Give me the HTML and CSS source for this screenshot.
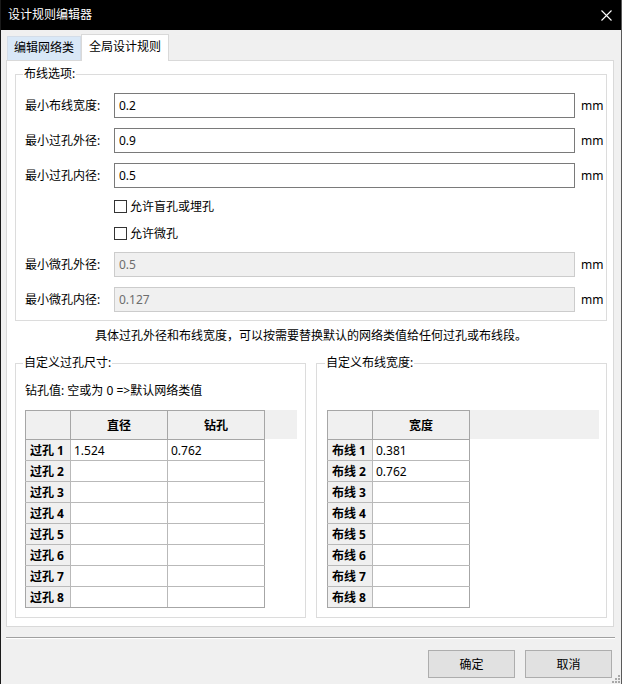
FILE: index.html
```html
<!DOCTYPE html>
<html lang="zh-CN">
<head>
  <meta charset="UTF-8" />
  <meta name="viewport" content="width=device-width, initial-scale=1.0" />
  <title>设计规则编辑器</title>
  <link rel="stylesheet" href="styles.css">
</head>
<body>
  <div class="window">
    <div class="titlebar">
      <span>设计规则编辑器</span>
      <svg class="close" width="11" height="11" viewBox="0 0 11 11">
        <path d="M0.5 0.5L10.5 10.5M10.5 0.5L0.5 10.5" stroke="#fff" stroke-width="1.1" fill="none" />
      </svg>
    </div>

    <div class="tabs">
      <div class="tab">编辑网络类</div>
      <div class="tab active">全局设计规则</div>
    </div>

    <div class="pane">
      <fieldset class="group routing">
        <legend>布线选项:</legend>
        <div class="form">
          <label>最小布线宽度:</label>
          <input class="field" type="text" value="0.2" />
          <span class="unit">mm</span>

          <label>最小过孔外径:</label>
          <input class="field" type="text" value="0.9" />
          <span class="unit">mm</span>

          <label>最小过孔内径:</label>
          <input class="field" type="text" value="0.5" />
          <span class="unit">mm</span>

          <label class="check"><input type="checkbox" />允许盲孔或埋孔</label>
          <label class="check"><input type="checkbox" />允许微孔</label>

          <label>最小微孔外径:</label>
          <input class="field" type="text" value="0.5" disabled />
          <span class="unit">mm</span>

          <label>最小微孔内径:</label>
          <input class="field" type="text" value="0.127" disabled />
          <span class="unit">mm</span>
        </div>
      </fieldset>

      <p class="note">具体过孔外径和布线宽度，可以按需要替换默认的网络类值给任何过孔或布线段。</p>

      <div class="custom">
        <fieldset class="group">
          <legend>自定义过孔尺寸:</legend>
          <div class="hint">钻孔值: 空或为 0 =&gt;默认网络类值</div>
          <div class="grid">
            <table class="vias">
              <colgroup><col class="head-col"><col class="val-col"><col class="val-col"></colgroup>
              <thead>
                <tr><th></th><th>直径</th><th>钻孔</th></tr>
              </thead>
              <tbody>
                <tr><th>过孔 1</th><td>1.524</td><td>0.762</td></tr>
                <tr><th>过孔 2</th><td></td><td></td></tr>
                <tr><th>过孔 3</th><td></td><td></td></tr>
                <tr><th>过孔 4</th><td></td><td></td></tr>
                <tr><th>过孔 5</th><td></td><td></td></tr>
                <tr><th>过孔 6</th><td></td><td></td></tr>
                <tr><th>过孔 7</th><td></td><td></td></tr>
                <tr><th>过孔 8</th><td></td><td></td></tr>
              </tbody>
            </table>
          </div>
        </fieldset>

        <fieldset class="group">
          <legend>自定义布线宽度:</legend>
          <div class="hint"></div>
          <div class="grid">
            <table class="tracks">
              <colgroup><col class="head-col"><col class="val-col"></colgroup>
              <thead>
                <tr><th></th><th>宽度</th></tr>
              </thead>
              <tbody>
                <tr><th>布线 1</th><td>0.381</td></tr>
                <tr><th>布线 2</th><td>0.762</td></tr>
                <tr><th>布线 3</th><td></td></tr>
                <tr><th>布线 4</th><td></td></tr>
                <tr><th>布线 5</th><td></td></tr>
                <tr><th>布线 6</th><td></td></tr>
                <tr><th>布线 7</th><td></td></tr>
                <tr><th>布线 8</th><td></td></tr>
              </tbody>
            </table>
          </div>
        </fieldset>
      </div>
    </div>

    <div class="separator"></div>

    <div class="buttons">
      <button>确定</button>
      <button>取消</button>
    </div>

    <svg class="grip" width="9" height="9" viewBox="0 0 9 9">
      <rect x="6" y="0" width="2" height="2" fill="#a8a8a8" />
      <rect x="3" y="3" width="2" height="2" fill="#a8a8a8" />
      <rect x="6" y="3" width="2" height="2" fill="#a8a8a8" />
      <rect x="0" y="6" width="2" height="2" fill="#a8a8a8" />
      <rect x="3" y="6" width="2" height="2" fill="#a8a8a8" />
      <rect x="6" y="6" width="2" height="2" fill="#a8a8a8" />
    </svg>
  </div>
</body>
</html>
```

FILE: styles.css
```css
* {
  box-sizing: border-box;
}
body {
  margin: 0;
  padding: 0;
  background: #f0f0f0;
  font-family: "Noto Sans", "Noto Sans CJK SC", sans-serif;
  font-size: 12px;
  color: #000;
}
.window {
  position: relative;
  width: 622px;
  height: 684px;
  background: #f0f0f0;
  border-left: 1px solid #1a1a1a;
  border-right: 1px solid #5a5a5a;
  overflow: hidden;
}
.titlebar {
  height: 30px;
  background: #000;
  color: #fff;
  display: flex;
  align-items: center;
  justify-content: space-between;
  padding: 0 9px 0 8px;
  margin-left: -1px;
}
.titlebar span {
  line-height: 16px;
}
.close {
  display: block;
}

/* tab strip */
.tabs {
  height: 30px;
  display: flex;
  align-items: flex-end;
  padding-left: 6px;
}
.tab {
  height: 24px;
  line-height: 22px;
  padding: 0 6px;
  background: #d9e8f7;
  border: 1px solid #d4dde8;
  border-bottom: none;
  white-space: nowrap;
}
.tab.active {
  position: relative;
  z-index: 1;
  height: 27px;
  line-height: 24px;
  margin-bottom: -1px;
  padding: 0 7px;
  background: #fff;
  border-color: #d9d9d9;
}

.pane {
  margin: 0 7px 0 5px;
  background: #fff;
  border: 1px solid #d9d9d9;
  padding: 5px 6px 8px 8px;
}
.group {
  margin: 0;
  border: 1px solid #dcdcdc;
  padding: 11px 8px 8px 9px;
  min-width: 0;
}
.group legend {
  padding: 0 1px;
  margin-left: -2px;
  line-height: 16px;
}

/* form rows: three inputs, two checkboxes, two disabled inputs */
.form {
  display: grid;
  grid-template-columns: 89px 461px 1fr;
  grid-template-rows: 25px 25px 25px 17px 17px 25px 25px;
  row-gap: 10px;
  align-items: center;
}
.form label {
  line-height: 16px;
}
.field {
  height: 25px;
  width: 100%;
  border: 1px solid #7a7a7a;
  padding: 0 4px;
  font: inherit;
  color: #000;
  background: #fff;
  outline: none;
}
.field:disabled {
  background: #f0f0f0;
  border-color: #cccccc;
  color: #6d6d6d;
}
.unit {
  padding-left: 6px;
}
.form .check {
  grid-column: 2 / 4;
  height: 17px;
  display: flex;
  align-items: center;
}
.check input {
  -webkit-appearance: none;
  appearance: none;
  width: 13px;
  height: 13px;
  margin: 0 3px 0 0;
  border: 1px solid #333;
  background: #fff;
}

.note {
  margin: 7px 0 0;
  line-height: 16px;
  text-align: center;
}

/* custom size groups */
.custom {
  display: grid;
  grid-template-columns: 291px 291px;
  column-gap: 10px;
  margin-top: 11px;
}
.custom .group {
  padding: 12px 8px 9px 9px;
}
.hint {
  height: 16px;
  line-height: 16px;
  margin-bottom: 11px;
}
.custom .group:last-child {
  padding-left: 10px;
}
.grid {
  width: 272px;
  background: linear-gradient(to bottom, #f0f0f0 29px, transparent 29px);
}
table {
  border-collapse: collapse;
  table-layout: fixed;
}
.vias {
  width: 240px;
}
.tracks {
  width: 142px;
}
.head-col {
  width: 45px;
}
.vias .val-col {
  width: 97px;
}
.tracks .val-col {
  width: 97px;
}
th,
td {
  border: 1px solid #b9b9b9;
  padding: 0 3px;
  font-weight: normal;
  text-align: left;
  white-space: nowrap;
}
thead th {
  height: 29px;
  background: #f0f0f0;
  font-weight: bold;
  text-align: center;
  border-color: #a6a6a6;
}
tbody tr {
  height: 21px;
}
tbody th {
  background: #f0f0f0;
  font-weight: bold;
  padding-left: 4px;
  border-left-color: #a6a6a6;
}
tbody td {
  background: #fff;
}
tbody tr:last-child th,
tbody tr:last-child td {
  border-bottom-color: #a6a6a6;
}
tr > :last-child {
  border-right-color: #a6a6a6;
}

.separator {
  margin: 10px 6px 0 5px;
  height: 2px;
  border-top: 1px solid #a0a0a0;
  border-bottom: 1px solid #fff;
}
.buttons {
  display: flex;
  justify-content: flex-end;
  gap: 10px;
  margin-top: 11px;
  padding-right: 9px;
}
.buttons button {
  width: 87px;
  height: 28px;
  font: inherit;
  color: #000;
  background: #e1e1e1;
  border: 1px solid #adadad;
  border-radius: 0;
}
.grip {
  position: absolute;
  right: 0;
  bottom: 0;
}
```
